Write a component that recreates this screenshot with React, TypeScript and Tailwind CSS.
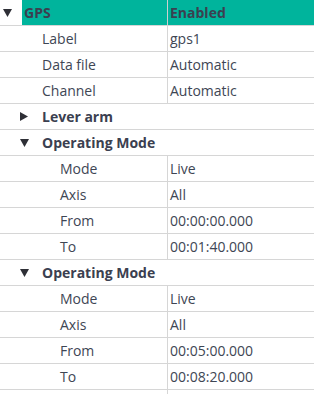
import React from "react";

type Row =
  | { kind: "prop"; depth: 1 | 2; label: string; value: string }
  | { kind: "group"; label: string; open: boolean };

const rows: Row[] = [
  { kind: "prop", depth: 1, label: "Label", value: "gps1" },
  { kind: "prop", depth: 1, label: "Data file", value: "Automatic" },
  { kind: "prop", depth: 1, label: "Channel", value: "Automatic" },
  { kind: "group", label: "Lever arm", open: false },
  { kind: "group", label: "Operating Mode", open: true },
  { kind: "prop", depth: 2, label: "Mode", value: "Live" },
  { kind: "prop", depth: 2, label: "Axis", value: "All" },
  { kind: "prop", depth: 2, label: "From", value: "00:00:00.000" },
  { kind: "prop", depth: 2, label: "To", value: "00:01:40.000" },
  { kind: "group", label: "Operating Mode", open: true },
  { kind: "prop", depth: 2, label: "Mode", value: "Live" },
  { kind: "prop", depth: 2, label: "Axis", value: "All" },
  { kind: "prop", depth: 2, label: "From", value: "00:05:00.000" },
  { kind: "prop", depth: 2, label: "To", value: "00:08:20.000" },
];

const Arrow = ({ open }: { open: boolean }) =>
  open ? (
    <svg width="9" height="8" viewBox="0 0 9 8" className="shrink-0">
      <path d="M0 0h9L4.5 8z" fill="#2e2f36" />
    </svg>
  ) : (
    <svg width="8" height="9" viewBox="0 0 8 9" className="shrink-0">
      <path d="M0 0l8 4.5L0 9z" fill="#2e2f36" />
    </svg>
  );

const App = () => {
  return (
    <div
      className="w-[314px] h-[394px] overflow-hidden bg-white text-[14px] text-[#3e4654]"
      style={{ fontFamily: '"Open Sans", "Noto Sans", sans-serif' }}
    >
      {/* header */}
      <div className="flex h-[26px] border-b border-[#d6d6d6]">
        <div className="flex w-[22px] items-center pl-[3px]">
          <Arrow open />
        </div>
        <div className="flex flex-1 bg-[#00b49c] font-bold text-[#3b4050]">
          <div className="flex w-[146px] items-center border-r border-[#cfcfcf] pl-[2px]">GPS</div>
          <div className="flex flex-1 items-center pl-[2px]">Enabled</div>
        </div>
      </div>

      {rows.map((row, i) =>
        row.kind === "group" ? (
          <div
            key={i}
            className="flex h-[26px] items-center border-b border-[#d6d6d6] pl-[20px] font-bold text-[#3b4050]"
          >
            <div className="flex w-[22px] items-center">
              <Arrow open={row.open} />
            </div>
            {row.label}
          </div>
        ) : (
          <div key={i} className="flex h-[26px] border-b border-[#d6d6d6]">
            <div
              className={`flex w-[168px] items-center border-r border-[#d6d6d6] ${
                row.depth === 1 ? "pl-[42px]" : "pl-[60px]"
              }`}
            >
              {row.label}
            </div>
            <div className="flex flex-1 items-center pl-[2px]">{row.value}</div>
          </div>
        )
      )}

      <div className="flex h-[26px]">
        <div className="w-[168px] border-r border-[#d6d6d6]" />
      </div>
    </div>
  );
};

export default App;
